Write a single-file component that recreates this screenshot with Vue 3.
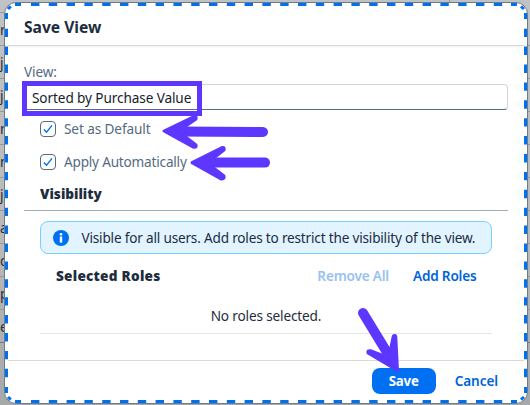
<script setup>
import { ref } from 'vue'

const viewName = ref('Sorted by Purchase Value')
const options = ref([
  { label: 'Set as Default', key: 'default', checked: true },
  { label: 'Apply Automatically', key: 'auto', checked: true },
])
const rows = ['r', 'ja', 'ja', 'n', 'n', 'je', 'a', 'd', 'p', 'e']
</script>

<template>
  <main class="page">
    <div class="backdrop">
      <div class="strip"></div>
      <div v-for="(row, i) in rows" :key="i" class="row">{{ row }}</div>
    </div>

    <section class="dialog">
      <header class="head">Save View</header>
      <div class="body">
        <label class="label">View:</label>
        <div class="field"><span class="value">{{ viewName }}</span></div>
        <div class="options">
          <div v-for="o in options" :key="o.key" class="option">
            <span class="box">
              <svg v-if="o.checked" width="14" height="14" viewBox="0 0 14 14"><path d="M2.9 7.4 5.5 10.2 11 3.4" fill="none" stroke="#0070f2" stroke-width="1.4" /></svg>
            </span>
            <span :class="['caption', o.key]">{{ o.label }}</span>
          </div>
        </div>
        <h2 class="visibility"><span>Visibility</span></h2>
        <div class="info">
          <svg width="16" height="16" viewBox="0 0 16 16"><circle cx="8" cy="8" r="8" fill="#0070f2" /><circle cx="8" cy="4.2" r="1.3" fill="#fff" /><path d="M6.8 6.5H9.2V12.6H6.8Z" fill="#fff" /></svg>
          <span class="infotext">Visible for all users. Add roles to restrict the visibility of the view.</span>
        </div>
        <div class="toolbar">
          <span class="selected">Selected Roles</span>
          <span class="link off">Remove All</span>
          <span class="link add">Add Roles</span>
        </div>
        <div class="empty"><span>No roles selected.</span></div>
      </div>
      <footer class="foot">
        <button class="save">Save</button>
        <span class="cancel">Cancel</span>
      </footer>
    </section>

    <svg class="overlay" width="530" height="405" viewBox="0 0 530 405">
      <g fill="none" stroke="#0070f2" stroke-width="3">
        <path d="M31 4.5H505M31 401.5H505" stroke-dasharray="8.4 9.4" />
        <path d="M6.5 28.7V383M525.5 28.7V383" stroke-dasharray="8.4 9.5" />
        <path d="M15 4.5H21M511 4.5H517M15 401.5H21M511 401.5H517M6.5 13V19M525.5 13V19M6.5 387V393M525.5 387V393" />
        <path d="M8 9 10.8 6.3M521 6.3 524 9M8 397 10.8 399.7M521 399.7 524 397" />
      </g>
      <rect x="24.5" y="83.5" width="175" height="30" fill="none" stroke="#5d36ff" stroke-width="5" />
      <g fill="none" stroke="#5d36ff" stroke-linecap="round">
        <path d="M177 131.4 263 132" stroke-width="10" />
        <path d="M205 162.6H265" stroke-width="10" />
        <path d="M363 313 388 354" stroke-width="10" />
      </g>
      <g fill="#5d36ff" stroke="#5d36ff" stroke-width="3" stroke-linejoin="round">
        <path d="M164 131 194 116.5Q197 116 196 119L183 128V135L196 145Q197 148 193 147Z" />
        <path d="M192 162.7 222 147.5Q225 147 224 150L211 160V166L224 176Q225 179 221 179Z" />
        <path d="M397.5 370.5 395.8 337Q395.5 334.5 393.3 336L390 352 384 356 371 350.8Q367 350.2 368 353Z" />
      </g>
    </svg>
  </main>
</template>

<style>
body { margin: 0; overflow: hidden; }
</style>

<style scoped>
* { box-sizing: border-box; }
.page {
  position: relative;
  width: 530px;
  height: 405px;
  overflow: hidden;
  padding: 2px 2px 1px 4px;
  background: linear-gradient(#c1c2c3, #b9b9b9 60%, #a6a8aa);
  font: 13.6px/18px "Noto Sans", "Open Sans", sans-serif;
  letter-spacing: -0.1px;
  color: #1d2d3e;
}
.backdrop { position: absolute; inset: 0; }
.strip { height: 13px; width: 450px; border-right: 1px solid #999; border-bottom: 1px solid #999; }
.row { height: 33px; line-height: 34px; border-bottom: 1px solid #999; white-space: nowrap; }
.row:last-child { border-bottom-color: #777; }
.dialog {
  position: relative;
  width: 524px;
  height: 402px;
  border: 1px solid #6f7b86;
  border-radius: 12px;
  background: #fff;
  display: flex;
  flex-direction: column;
}
.head {
  height: 43px;
  margin: 0 3px;
  padding: 14px 16px 0;
  border-bottom: 1px solid #d5d7d9;
  box-shadow: 0 1px 2px #00000010;
  font-size: 15.6px;
  line-height: 20px;
  font-weight: 700;
  letter-spacing: 0;
}
.body { height: 314px; padding: 18px 19px 0; display: flex; flex-direction: column; }
.label { height: 20px; color: #556b82; line-height: 16px; }
.field {
  height: 26px;
  border: 1px solid #d0d5da;
  border-bottom-color: #556b81;
  border-radius: 4px;
  padding: 0 7px;
  line-height: 25px;
  color: #131e29;
  white-space: nowrap;
}
.options { padding: 2px 0 0 16px; }
.option { height: 33px; display: flex; align-items: center; gap: 8px; color: #556b82; white-space: nowrap; }
.auto { letter-spacing: -0.2px; }
.box { width: 16px; height: 16px; border: 1px solid #556b81; border-radius: 4px; display: flex; }
.visibility {
  height: 33px;
  margin: 0;
  padding: 7px 16px 0;
  border-bottom: 1px solid #a3adb8;
  font-size: 13.6px;
  line-height: 18px;
  font-weight: 900;
  letter-spacing: 0;
}
.info {
  height: 33px;
  margin: 10px 16px 0;
  padding: 0 12px;
  border: 1px solid #7bcfff;
  border-radius: 8px;
  background: #e1f4ff;
  display: flex;
  align-items: center;
  gap: 12.5px;
  white-space: nowrap;
  letter-spacing: -0.19px;
}
.info svg { flex: none; }
.toolbar { height: 45px; display: flex; align-items: center; padding: 0 31.5px 1px 32px; white-space: nowrap; }
.selected { font-weight: 900; flex: 1; letter-spacing: 0.25px; }
.link { font-weight: 600; color: #0064d9; letter-spacing: -0.2px; }
.off { color: #99c1f0; margin-right: 24px; }
.empty { height: 35px; margin: 0 16px; border-bottom: 1px solid #e5e5e5; text-align: center; line-height: 34px; letter-spacing: -0.15px; }
.foot {
  height: 43px;
  margin: 0 3px;
  border-top: 1px solid #d9d9d9;
  padding: 7px 26px 0 0;
  display: flex;
  justify-content: flex-end;
  align-items: flex-start;
}
.save {
  width: 64px;
  height: 26px;
  border: 0;
  border-radius: 8px;
  background: #0070f2;
  color: #fff;
  font: 700 13.3px/26px "Noto Sans", sans-serif;
  letter-spacing: -0.2px;
  padding: 0;
  margin-right: 19px;
}
.cancel { color: #0064d9; font-weight: 600; line-height: 26px; letter-spacing: -0.1px; }
.overlay { position: absolute; inset: 0; pointer-events: none; }
</style>
